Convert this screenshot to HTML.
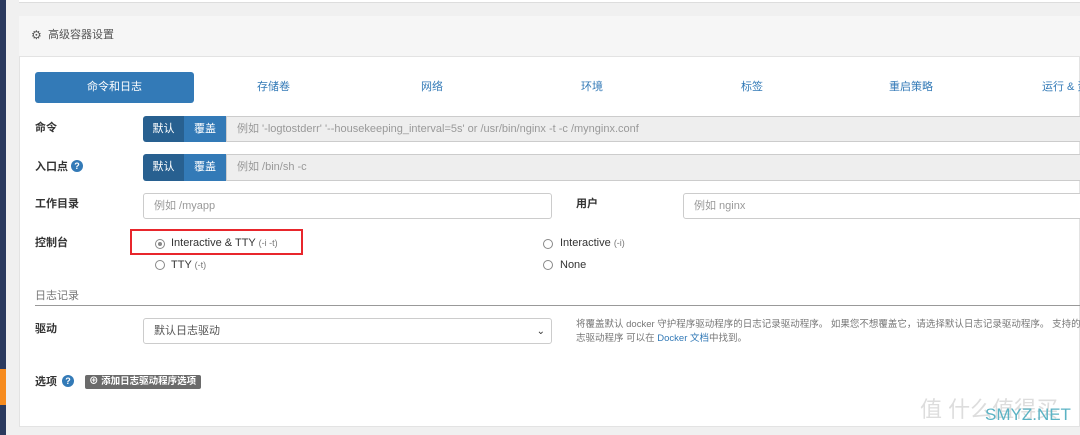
<!DOCTYPE html>
<html><head><meta charset="utf-8"><style>
*{box-sizing:border-box;margin:0;padding:0}
body{width:1080px;height:435px;overflow:hidden;background:#f0f0f0;font-family:"Liberation Sans","Noto Sans CJK SC",sans-serif;font-size:11px;color:#333;position:relative;line-height:1.2}
.a{position:absolute;white-space:nowrap}
.lbl{font-weight:bold;font-size:11px;color:#333}
.inp{position:absolute;border:1px solid #ccc;border-radius:3px;background:#fff;color:#999;font-size:11px;padding-left:10px;white-space:nowrap;overflow:hidden;line-height:24px}
.ro{background:#eee}
.tab{position:absolute;top:72px;height:31px;line-height:31px;color:#337ab7;font-size:11px;white-space:nowrap}
.rad{position:absolute;width:10px;height:10px;border:1px solid #888;border-radius:50%;background:#fff}
.q{position:absolute;width:12px;height:12px;border-radius:50%;background:#337ab7;color:#fff;font-size:9px;font-weight:bold;text-align:center;line-height:12px}
</style></head><body>
<div class="a" style="left:0;top:0;width:6px;height:435px;background:#2b3a5e"></div>
<div class="a" style="left:0;top:369px;width:6px;height:36px;background:#f68b1f"></div>
<div class="a" style="left:19px;top:0;width:1061px;height:3px;background:#fff;border-bottom:1px solid #ddd"></div>
<div class="a" style="left:19px;top:16px;width:1061px;height:411px;background:#fff;border:1px solid #e3e3e3"></div>
<div class="a" style="left:19px;top:16px;width:1061px;height:41px;background:#f6f6f6;border-bottom:1px solid #e3e3e3"></div>
<div class="a" style="left:31px;top:28px;font-size:12px;color:#555">⚙</div>
<div class="a" style="left:48px;top:29px;font-size:11px;color:#555">高级容器设置</div>

<div class="a" style="left:35px;top:72px;width:159px;height:31px;background:#337ab7;border-radius:3px;color:#fff;text-align:center;line-height:31px">命令和日志</div>
<div class="tab" style="left:257px">存储卷</div>
<div class="tab" style="left:421px">网络</div>
<div class="tab" style="left:581px">环境</div>
<div class="tab" style="left:741px">标签</div>
<div class="tab" style="left:889px">重启策略</div>
<div class="tab" style="left:1042px">运行 &amp; 资源</div>

<div class="a lbl" style="left:35px;top:122px">命令</div>
<div class="a" style="left:143px;top:116px;width:41px;height:26px;background:#286090;color:#fff;border-radius:3px 0 0 3px;text-align:center;line-height:26px">默认</div>
<div class="a" style="left:184px;top:116px;width:42px;height:26px;background:#337ab7;color:#fff;text-align:center;line-height:26px">覆盖</div>
<div class="inp ro" style="left:226px;top:116px;width:870px;height:26px;border-radius:0">例如 '-logtostderr' '--housekeeping_interval=5s' or /usr/bin/nginx -t -c /mynginx.conf</div>

<div class="a lbl" style="left:35px;top:161px">入口点</div>
<div class="q" style="left:71px;top:160px">?</div>
<div class="a" style="left:143px;top:154px;width:41px;height:27px;background:#286090;color:#fff;border-radius:3px 0 0 3px;text-align:center;line-height:27px">默认</div>
<div class="a" style="left:184px;top:154px;width:42px;height:27px;background:#337ab7;color:#fff;text-align:center;line-height:27px">覆盖</div>
<div class="inp ro" style="left:226px;top:154px;width:870px;height:27px;border-radius:0;line-height:25px">例如 /bin/sh -c</div>

<div class="a lbl" style="left:35px;top:198px">工作目录</div>
<div class="inp" style="left:143px;top:193px;width:409px;height:26px">例如 /myapp</div>
<div class="a lbl" style="left:576px;top:198px">用户</div>
<div class="inp" style="left:683px;top:193px;width:410px;height:26px">例如 nginx</div>

<div class="a lbl" style="left:35px;top:237px">控制台</div>
<div class="a" style="left:130px;top:229px;width:173px;height:26px;border:2px solid #e8262c"></div>
<div class="rad" style="left:155px;top:239px"></div><div class="a" style="left:158px;top:242px;width:4px;height:4px;border-radius:50%;background:#888"></div>
<div class="a" style="left:171px;top:237px;font-size:11px">Interactive &amp; TTY <span style="color:#777;font-size:9px">(-i -t)</span></div>
<div class="rad" style="left:155px;top:260px"></div>
<div class="a" style="left:171px;top:259px">TTY <span style="color:#777;font-size:9px">(-t)</span></div>
<div class="rad" style="left:543px;top:239px"></div>
<div class="a" style="left:560px;top:237px">Interactive <span style="color:#777;font-size:9px">(-i)</span></div>
<div class="rad" style="left:543px;top:260px"></div>
<div class="a" style="left:560px;top:259px">None</div>

<div class="a" style="left:35px;top:290px;color:#777;font-size:11px">日志记录</div>
<div class="a" style="left:35px;top:305px;width:1045px;height:1px;background:#999"></div>

<div class="a lbl" style="left:35px;top:323px">驱动</div>
<div class="inp" style="left:143px;top:318px;width:409px;height:26px;color:#555">默认日志驱动<span style="position:absolute;right:6px;top:1px;font-size:10px;color:#333">⌄</span></div>
<div class="a" style="left:576px;top:318px;font-size:9.5px;color:#777;line-height:14px">将覆盖默认 docker 守护程序驱动程序的日志记录驱动程序。 如果您不想覆盖它，请选择默认日志记录驱动程序。 支持的日<br>志驱动程序 可以在 <span style="color:#337ab7">Docker 文档</span>中找到。</div>

<div class="a lbl" style="left:35px;top:376px">选项</div>
<div class="q" style="left:62px;top:375px">?</div>
<div class="a" style="left:85px;top:375px;width:116px;height:14px;background:#6b6b6b;border-radius:2px;color:#fff;font-size:9.5px;font-weight:bold;line-height:14px;padding-left:4px">⊕ 添加日志驱动程序选项</div>

<div class="a" style="left:920px;top:397px;font-size:22px;color:#ddd">值 什么值得买</div>
<div class="a" style="left:985px;top:405px;font-size:17px;color:#5bb3c4">SMYZ.NET</div>
</body></html>
